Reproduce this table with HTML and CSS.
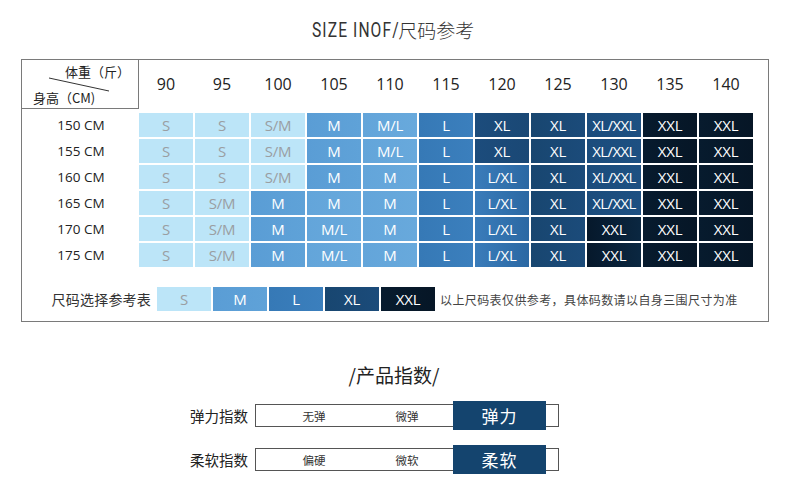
FILE: index.html
```html
<!DOCTYPE html>
<html lang="zh">
<head>
<meta charset="utf-8">
<title>SIZE INOF</title>
<link rel="stylesheet" href="styles.css">
</head>
<body>
<div class="page">
  <div class="title"><span class="latin">SIZE INOF/</span><span class="cjk">尺码参考</span></div>

  <div class="chart">
    <div class="head-row">
      <div class="corner">
        <svg class="diag" width="116" height="48" viewBox="0 0 116 48"><line x1="27" y1="18" x2="87" y2="31" stroke="#333" stroke-width="1"/></svg>
        <div class="corner-top">体重（斤）</div>
        <div class="corner-bot">身高（CM)</div>
      </div>
      <div class="nums">
        <div class="num">90</div><div class="num">95</div><div class="num">100</div><div class="num">105</div><div class="num">110</div><div class="num">115</div><div class="num">120</div><div class="num">125</div><div class="num">130</div><div class="num">135</div><div class="num">140</div>
      </div>
    </div>

    <div class="rows">
      <div class="row"><div class="rlabel">150 CM</div><div class="cells">
        <div class="cell c-s">S</div><div class="cell c-s">S</div><div class="cell c-s">S/M</div><div class="cell c-m">M</div><div class="cell c-ml">M/L</div><div class="cell c-l">L</div><div class="cell c-xl">XL</div><div class="cell c-xl2">XL</div><div class="cell c-xlxxl">XL/XXL</div><div class="cell c-xxl">XXL</div><div class="cell c-xxl">XXL</div>
      </div></div>
      <div class="row"><div class="rlabel">155 CM</div><div class="cells">
        <div class="cell c-s">S</div><div class="cell c-s">S</div><div class="cell c-s">S/M</div><div class="cell c-m">M</div><div class="cell c-ml">M/L</div><div class="cell c-l">L</div><div class="cell c-xl">XL</div><div class="cell c-xl2">XL</div><div class="cell c-xlxxl">XL/XXL</div><div class="cell c-xxl">XXL</div><div class="cell c-xxl">XXL</div>
      </div></div>
      <div class="row"><div class="rlabel">160 CM</div><div class="cells">
        <div class="cell c-s">S</div><div class="cell c-s">S</div><div class="cell c-s">S/M</div><div class="cell c-m">M</div><div class="cell c-ml">M</div><div class="cell c-l">L</div><div class="cell c-lxl">L/XL</div><div class="cell c-xl2">XL</div><div class="cell c-xlxxl">XL/XXL</div><div class="cell c-xxl">XXL</div><div class="cell c-xxl">XXL</div>
      </div></div>
      <div class="row"><div class="rlabel">165 CM</div><div class="cells">
        <div class="cell c-s">S</div><div class="cell c-s">S/M</div><div class="cell c-m">M</div><div class="cell c-ml">M</div><div class="cell c-ml">M</div><div class="cell c-l">L</div><div class="cell c-lxl">L/XL</div><div class="cell c-xl2">XL</div><div class="cell c-xlxxl">XL/XXL</div><div class="cell c-xxl">XXL</div><div class="cell c-xxl">XXL</div>
      </div></div>
      <div class="row"><div class="rlabel">170 CM</div><div class="cells">
        <div class="cell c-s">S</div><div class="cell c-s">S/M</div><div class="cell c-m">M</div><div class="cell c-ml">M/L</div><div class="cell c-ml">M</div><div class="cell c-l">L</div><div class="cell c-lxl">L/XL</div><div class="cell c-xl2">XL</div><div class="cell c-xxl0">XXL</div><div class="cell c-xxl">XXL</div><div class="cell c-xxl">XXL</div>
      </div></div>
      <div class="row"><div class="rlabel">175 CM</div><div class="cells">
        <div class="cell c-s">S</div><div class="cell c-s">S/M</div><div class="cell c-m">M</div><div class="cell c-ml">M/L</div><div class="cell c-ml">M</div><div class="cell c-l">L</div><div class="cell c-lxl">L/XL</div><div class="cell c-xl2">XL</div><div class="cell c-xxl0">XXL</div><div class="cell c-xxl">XXL</div><div class="cell c-xxl">XXL</div>
      </div></div>
    </div>

    <div class="legend">
      <div class="legend-label">尺码选择参考表</div>
      <div class="cells">
        <div class="cell c-s">S</div><div class="cell c-m">M</div><div class="cell c-l">L</div><div class="cell c-xl2">XL</div><div class="cell c-xxl">XXL</div>
      </div>
      <div class="note">以上尺码表仅供参考，具体码数请以自身三围尺寸为准</div>
    </div>
  </div>

  <div class="index">
    <div class="index-title">/产品指数/</div>
    <div class="irow">
      <div class="ilabel">弹力指数</div>
      <div class="bar">
        <div class="opt opt1">无弹</div>
        <div class="opt opt2">微弹</div>
        <div class="pick">弹力</div>
      </div>
    </div>
    <div class="irow">
      <div class="ilabel">柔软指数</div>
      <div class="bar">
        <div class="opt opt1">偏硬</div>
        <div class="opt opt2">微软</div>
        <div class="pick">柔软</div>
      </div>
    </div>
  </div>
</div>
</body>
</html>
```

FILE: styles.css
```css
* { box-sizing: border-box; }
html, body { margin: 0; padding: 0; background: #fff; }
body {
  font-family: "Open Sans", "Noto Sans CJK SC", sans-serif;
  color: #222;
}
.page { width: 790px; height: 497px; overflow: hidden; }

.title {
  height: 59px;
  display: flex;
  align-items: center;
  justify-content: center;
  color: #333;
  padding-right: 4px;
}
.title .latin {
  display: inline-block;
  font-family: "Roboto", "Liberation Sans", sans-serif;
  font-weight: 400;
  font-size: 20px;
  letter-spacing: 1.4px;
  line-height: 24px;
  transform: scaleX(0.78);
  transform-origin: left center;
  margin-right: -26px;
  white-space: nowrap;
}
.title .cjk {
  font-family: "Noto Sans CJK SC", sans-serif;
  font-size: 19px;
  line-height: 24px;
  font-weight: 300;
}

.chart {
  margin: 0 21px;
  width: 748px;
  border: 1px solid #7a7a7a;
  padding-bottom: 10px;
}
.head-row { display: flex; height: 49px; }
.corner {
  position: relative;
  width: 117px;
  height: 49px;
  border-right: 1px solid #7a7a7a;
  border-bottom: 1px solid #7a7a7a;
  display: flex;
  flex-direction: column;
  justify-content: space-between;
  padding: 4px 0 2px 0;
  font-family: "Noto Sans CJK SC", sans-serif;
  font-size: 13px;
  line-height: 16px;
  color: #222;
}
.diag { position: absolute; left: 0; top: 0; }
.corner-top { padding-left: 43px; }
.corner-bot { padding-left: 11px; }

.nums { display: flex; gap: 2px; align-items: center; }
.num {
  width: 54px;
  text-align: center;
  font-size: 16px;
  color: #222;
  padding-bottom: 1px;
}

.rows { margin-top: 4px; display: flex; flex-direction: column; gap: 2px; }
.row { display: flex; height: 24px; }
.rlabel {
  width: 117px;
  text-align: center;
  font-size: 13.5px;
  line-height: 24px;
  color: #222;
  padding-left: 1px;
}
.cells { display: flex; gap: 2px; }
.cell {
  width: 54px;
  height: 24px;
  line-height: 24px;
  text-align: center;
  font-size: 15px;
  color: #fff;
  white-space: nowrap;
  letter-spacing: -0.2px;
}
.c-s { background: #bce5f8; color: #9a9ea2; }
.c-m { background: linear-gradient(90deg, #5a9dd5, #5fa2d8); }
.c-ml { background: linear-gradient(90deg, #63a5da, #68a9dc); }
.c-l { background: linear-gradient(90deg, #3679b6, #3b7fbd); }
.c-lxl { background: linear-gradient(90deg, #3a7cba, #2b68a3); }
.c-xl { background: linear-gradient(90deg, #1c4c7c, #1a4875); }
.c-xl2 { background: linear-gradient(90deg, #184670, #1b4b7a); }
.c-xlxxl { background: linear-gradient(90deg, #1b4c7c, #1d5082); letter-spacing: -0.6px; }
.c-xxl0 { background: linear-gradient(90deg, #06182b, #0a2741); }
.c-xxl { background: linear-gradient(90deg, #071b2e, #061626); }

.legend { display: flex; margin-top: 20px; height: 24px; align-items: center; }
.legend-label {
  width: 129px;
  text-align: right;
  font-family: "Noto Sans CJK SC", sans-serif;
  font-size: 14px;
  color: #333;
  margin-right: 6px;
  letter-spacing: 0.2px;
}
.note {
  margin-left: 5px;
  font-family: "Noto Sans CJK SC", sans-serif;
  font-size: 12px;
  letter-spacing: 0.4px;
  color: #444;
}

.index { margin-top: 41px; }
.index-title {
  text-align: center;
  font-family: "Noto Sans CJK SC", sans-serif;
  font-size: 19px;
  line-height: 24px;
  color: #222;
  padding-right: 2px;
}
.irow {
  display: flex;
  align-items: center;
  height: 29px;
  margin-left: 190px;
  margin-top: 14px;
}
.irow + .irow { margin-top: 15px; }
.ilabel {
  width: 58px;
  font-family: "Noto Sans CJK SC", sans-serif;
  font-size: 14.5px;
  color: #222;
  margin-right: 7px;
  white-space: nowrap;
}
.bar {
  width: 304px;
  height: 23px;
  border: 1px solid #555;
  display: flex;
  align-items: center;
}
.opt {
  font-family: "Noto Sans CJK SC", sans-serif;
  font-size: 11.5px;
  color: #333;
  text-align: center;
}
.opt1 { width: 116px; }
.opt2 { width: 70px; }
.pick {
  margin-left: 11px;
  width: 93px;
  height: 29px;
  flex: none;
  background: #14446e;
  color: #fff;
  font-family: "Noto Sans CJK SC", sans-serif;
  font-size: 17px;
  line-height: 29px;
  text-align: center;
  letter-spacing: 1px;
}
```
